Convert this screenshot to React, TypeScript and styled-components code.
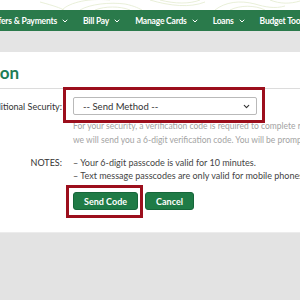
import React from 'react';
import styled, { createGlobalStyle } from 'styled-components';
import { ChevronDown } from 'lucide-react';

const GlobalStyle = createGlobalStyle`
  html, body {
    margin: 0;
    padding: 0;
    background: #ffffff;
    font-family: Lato, "Open Sans", Arial, sans-serif;
  }
  #root {
    width: 300px;
    height: 300px;
    overflow: hidden;
  }
`;

const Page = styled.div`
  display: flex;
  flex-direction: column;
  width: 300px;
  height: 300px;
  overflow: hidden;
`;

const Decor = styled.div`
  height: 10px;
  overflow: hidden;
  svg {
    display: block;
  }
`;

const Nav = styled.nav`
  height: 21px;
  background: #2a7a4b;
  display: flex;
  align-items: center;
  gap: 14px;
  margin-left: -21px;
  white-space: nowrap;
`;

const NavItem = styled.span`
  display: flex;
  align-items: center;
  gap: 4px;
  color: #ffffff;
  font-size: 8.5px;
  font-weight: 700;
  letter-spacing: -0.2px;
`;

const Crumbs = styled.div`
  height: 21px;
  background: #e4e4e4;
`;

const Main = styled.main`
  flex: 1;
  display: flex;
  flex-direction: column;
`;

/* page is scrolled: only the tail of the title shows at the left edge */
const TitleRow = styled.div`
  width: 19px;
  direction: rtl;
  white-space: nowrap;
  margin-top: 11px;
`;

const Title = styled.h1`
  display: inline;
  direction: ltr;
  unicode-bidi: isolate;
  margin: 0;
  color: #1e7d55;
  font-size: 17px;
  line-height: 20px;
  font-weight: 700;
`;

const Rule = styled.hr`
  margin: 5px 0 0;
  border: 0;
  border-top: 1px solid #dcdcdc;
`;

const Form = styled.div`
  display: grid;
  grid-template-columns: 62px 1fr;
  column-gap: 11px;
  margin-top: 8px;
`;

const Label = styled.div<{ $top?: number }>`
  display: flex;
  justify-content: flex-end;
  white-space: nowrap;
  color: #333333;
  font-size: 9px;
  line-height: 13px;
  padding-top: ${(p) => p.$top ?? 0}px;
`;

const Field = styled.div<{ $top?: number }>`
  display: flex;
  flex-direction: column;
  min-width: 0;
  padding-top: ${(p) => p.$top ?? 0}px;
`;

const Marked = styled.div`
  position: absolute;
  border: 3px solid #9c0f1d;
  pointer-events: none;
`;

const Select = styled.div`
  position: relative;
  width: 184px;
  height: 18px;
  box-sizing: border-box;
  border: 1px solid #b9b9b9;
  border-radius: 2px;
  display: flex;
  align-items: center;
  justify-content: space-between;
  padding: 0 5px 0 9px;
  color: #333333;
  font-size: 9.5px;
  ${Marked} {
    inset: -11px -9px -9px -11px;
  }
`;

const Help = styled.p`
  margin: 5px 0 0;
  white-space: nowrap;
  color: #a3a3a3;
  font-size: 8.5px;
  line-height: 13.5px;
`;

const Notes = styled.ul`
  list-style: none;
  margin: 0;
  padding: 0;
  color: #444444;
  font-size: 9px;
  line-height: 13px;
  white-space: nowrap;
`;

const Actions = styled.div`
  display: flex;
  gap: 7px;
  margin-top: 10px;
`;

const Button = styled.button`
  position: relative;
  height: 18px;
  box-sizing: border-box;
  padding: 0 10px;
  border: 1px solid #16663a;
  border-radius: 3px;
  background: #1f7b46;
  color: #ffffff;
  font-family: Lato, "Open Sans", Arial, sans-serif;
  font-size: 9px;
  font-weight: 700;
  ${Marked} {
    inset: -8px -6px -9px -8px;
  }
`;

const Footer = styled.footer`
  margin-top: 22px;
  flex: 1;
  background: #e3e3e3;
  border-top: 1px solid #ececec;
`;

const navItems = ['Transfers & Payments', 'Bill Pay', 'Manage Cards', 'Loans', 'Budget Tools'];

const App: React.FC = () => {
  return (
    <Page>
      <GlobalStyle />
      <Decor>
        <svg width="300" height="10" viewBox="0 0 300 10" fill="none" stroke="#e3ebcf" strokeWidth="0.8">
          <path d="M62 10 C70 2 90 -2 110 0" />
          <path d="M80 10 C90 4 110 2 125 4 C135 6 140 9 142 10" />
          <path d="M95 10 C105 6 120 6 130 10" />
          <path d="M40 2 C55 6 60 8 64 10" />
          <path d="M150 0 C170 6 190 8 205 2" />
          <path d="M160 0 C175 4 190 4 200 0" />
          <path d="M215 10 C225 2 240 0 255 4 C265 7 275 9 285 6" />
          <path d="M230 10 C240 5 255 5 265 10" />
          <path d="M270 0 C280 4 290 4 300 1" />
        </svg>
      </Decor>
      <Nav>
        {navItems.map((item, i) => (
          <NavItem key={item}>
            {item}
            {i < navItems.length - 1 && <ChevronDown size={8} strokeWidth={3} />}
          </NavItem>
        ))}
      </Nav>
      <Crumbs />
      <Main>
        <TitleRow>
          <Title>Two-Step Verification</Title>
        </TitleRow>
        <Rule />
        <Form>
          <Label $top={3}>Additional Security:</Label>
          <Field>
            <Select>
              <span>-- Send Method --</span>
              <ChevronDown size={9} strokeWidth={3} color="#333" />
              <Marked />
            </Select>
            <Help>
              For your security, a verification code is required to complete registration.
              <br />
              we will send you a 6-digit verification code. You will be prompted to enter it.
            </Help>
          </Field>
          <Label $top={9}>NOTES:</Label>
          <Field $top={9}>
            <Notes>
              <li>– Your 6-digit passcode is valid for 10 minutes.</li>
              <li>– Text message passcodes are only valid for mobile phones.</li>
            </Notes>
          </Field>
          <div />
          <Actions>
            <Button>
              Send Code
              <Marked />
            </Button>
            <Button>Cancel</Button>
          </Actions>
        </Form>
        <Footer />
      </Main>
    </Page>
  );
};

export default App;
